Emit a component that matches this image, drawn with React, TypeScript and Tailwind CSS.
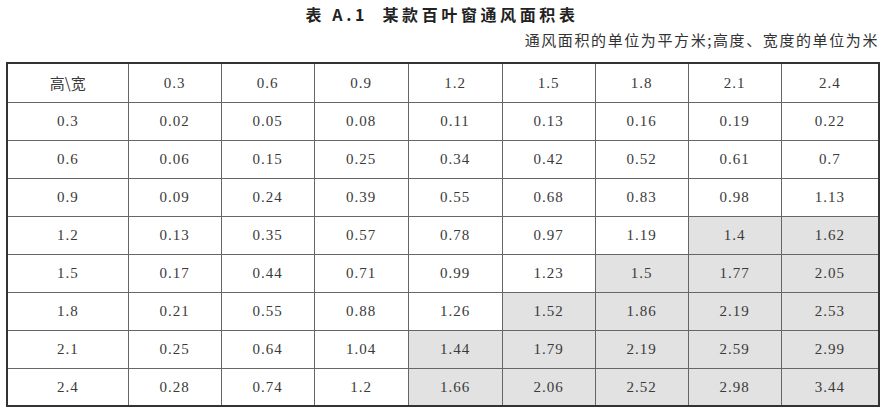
import React from "react";

const widths = ["0.3", "0.6", "0.9", "1.2", "1.5", "1.8", "2.1", "2.4"];
const colW = ["w-[93px]", "w-[93px]", "w-[94px]", "w-[94px]", "w-[93px]", "w-[93px]", "w-[93px]", "w-[98px]"];
const data: string[][] = [
  ["0.02", "0.05", "0.08", "0.11", "0.13", "0.16", "0.19", "0.22"],
  ["0.06", "0.15", "0.25", "0.34", "0.42", "0.52", "0.61", "0.7"],
  ["0.09", "0.24", "0.39", "0.55", "0.68", "0.83", "0.98", "1.13"],
  ["0.13", "0.35", "0.57", "0.78", "0.97", "1.19", "1.4", "1.62"],
  ["0.17", "0.44", "0.71", "0.99", "1.23", "1.5", "1.77", "2.05"],
  ["0.21", "0.55", "0.88", "1.26", "1.52", "1.86", "2.19", "2.53"],
  ["0.25", "0.64", "1.04", "1.44", "1.79", "2.19", "2.59", "2.99"],
  ["0.28", "0.74", "1.2", "1.66", "2.06", "2.52", "2.98", "3.44"],
];
const shadeFrom = [99, 99, 99, 6, 5, 4, 3, 3];

export default function App() {
  return (
    <div className="w-[884px] h-[413px] bg-white overflow-hidden text-[#333]">
      <div
        className="pt-[3px] h-[25px] text-center text-[16px] leading-[22px] font-bold tracking-[3.6px] text-[#222]"
        style={{ fontFamily: '"Noto Sans CJK SC", sans-serif' }}
      >
        表 A.1&nbsp;&nbsp;某款百叶窗通风面积表
      </div>
      <div
        className="mt-[5px] h-[20px] pr-[5px] text-right text-[15px] leading-[20px] tracking-[1.6px] text-[#333]"
        style={{ fontFamily: '"Noto Sans CJK SC", sans-serif' }}
      >
        通风面积的单位为平方米;高度、宽度的单位为米
      </div>
      <table
        className="ml-[6px] mt-[12px] w-[872px] table-fixed border-collapse border-2 border-[#333] text-[15px] tracking-[1px] text-[#3a3a3a]"
        style={{ fontFamily: '"Liberation Serif", "Noto Sans CJK SC", serif' }}
      >
        <colgroup>
          <col className="w-[121px]" />
          {colW.map((c, i) => (
            <col key={i} className={c} />
          ))}
        </colgroup>
        <thead>
          <tr className="h-[39px]">
            <th
              className="border border-[#666] font-normal text-[15px] tracking-normal"
              style={{ fontFamily: '"Noto Sans CJK SC", serif' }}
            >
              高\宽
            </th>
            {widths.map((w) => (
              <th key={w} className="border border-[#666] font-normal">
                {w}
              </th>
            ))}
          </tr>
        </thead>
        <tbody>
          {data.map((row, i) => (
            <tr key={i} className="h-[38px]">
              <td className="border border-[#666] text-center">{widths[i]}</td>
              {row.map((v, j) => (
                <td
                  key={j}
                  className={
                    j >= shadeFrom[i]
                      ? "border border-[#666] text-center bg-[#e2e2e2]"
                      : "border border-[#666] text-center"
                  }
                >
                  {v}
                </td>
              ))}
            </tr>
          ))}
        </tbody>
      </table>
    </div>
  );
}
